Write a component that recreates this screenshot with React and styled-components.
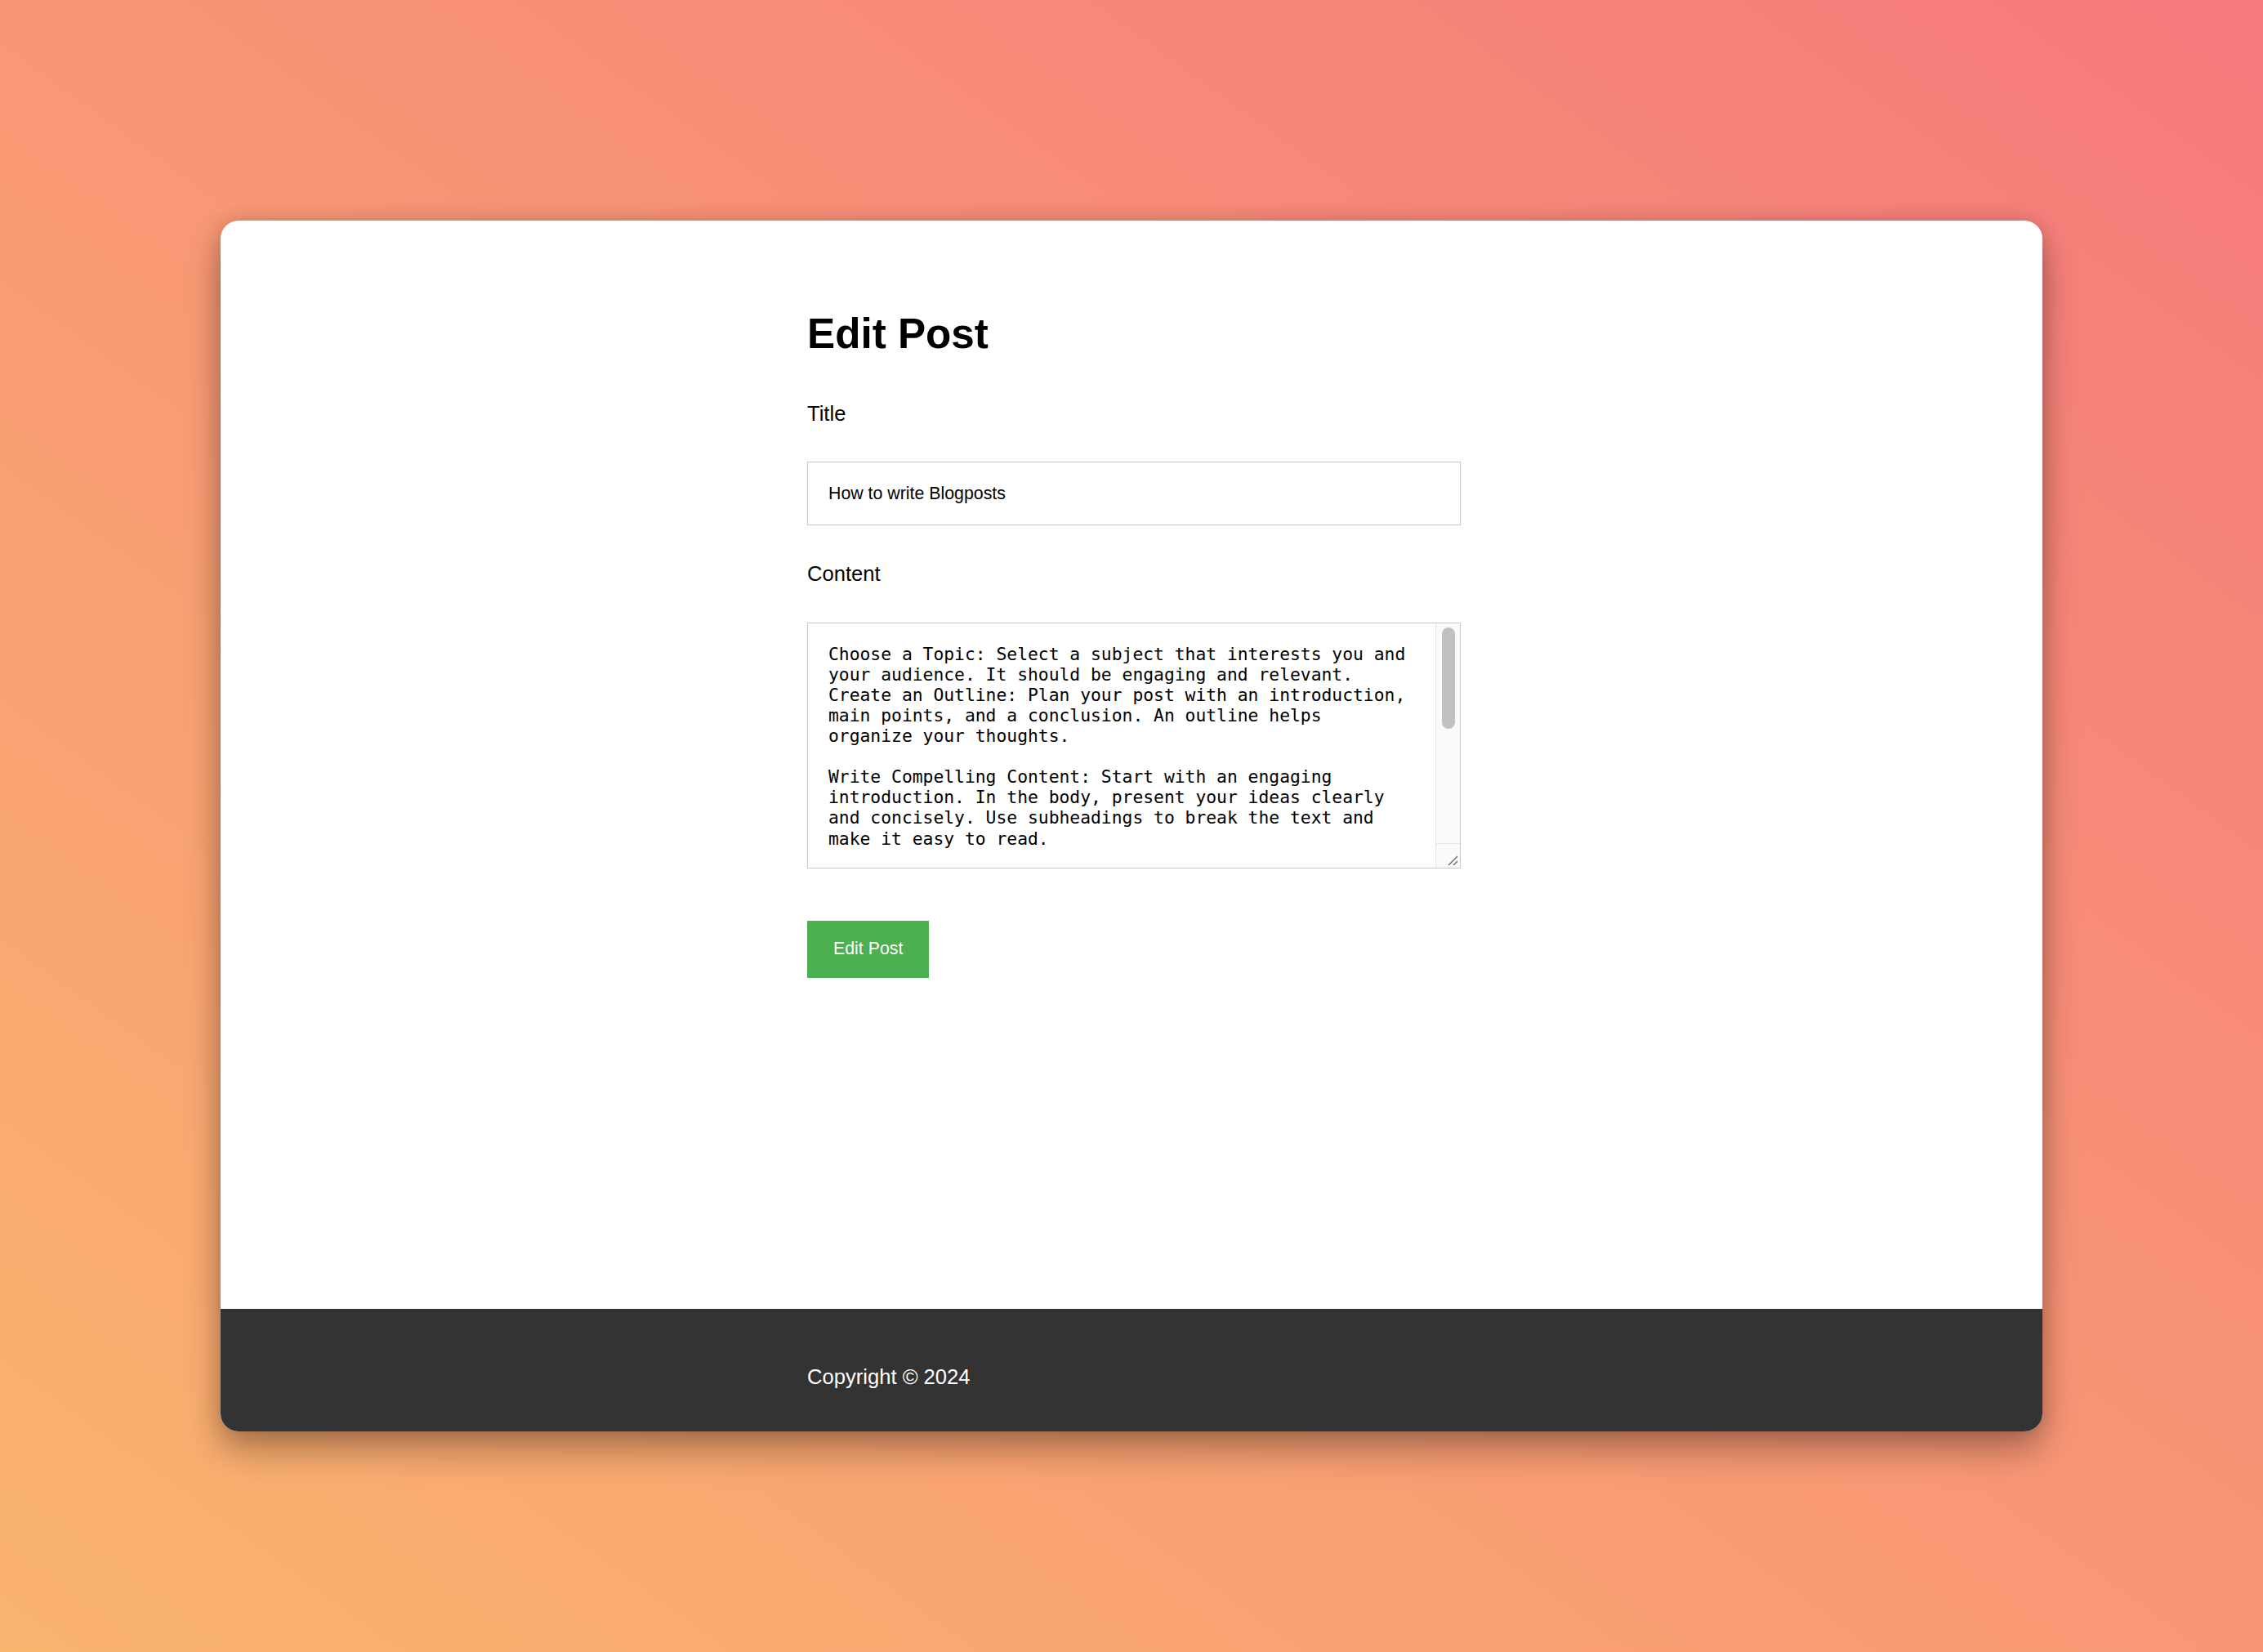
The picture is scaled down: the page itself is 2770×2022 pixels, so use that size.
import React from 'react';
import styled, { createGlobalStyle } from 'styled-components';

const GlobalStyle = createGlobalStyle`
  * {
    box-sizing: border-box;
  }

  html, body {
    margin: 0;
    padding: 0;
  }

  body {
    font-family: 'Liberation Sans', Arial, sans-serif;
    background: linear-gradient(to top right, #fab46e 0%, #f6797c 100%);
    min-height: 100vh;
  }
`;

const Page = styled.div`
  min-height: 100vh;
  display: flex;
  align-items: center;
  justify-content: center;
`;

const Card = styled.div`
  width: 2230px;
  height: 1482px;
  background: #fff;
  border-radius: 22px;
  overflow: hidden;
  display: flex;
  flex-direction: column;
  box-shadow: 0 22px 44px rgba(0, 0, 0, 0.32), 0 0 24px rgba(0, 0, 0, 0.12);
`;

const Main = styled.main`
  flex: 1;
  padding-top: 110px;
`;

const Container = styled.div`
  width: 800px;
  margin: 0 auto;
  position: relative;
  left: 3px;
`;

const Heading = styled.h1`
  margin: 0 0 53px;
  font-size: 51.2px;
  line-height: 1.15;
  font-weight: 700;
  color: #000;
`;

const Form = styled.form`
  display: flex;
  flex-direction: column;
  align-items: flex-start;
`;

const Group = styled.div`
  width: 100%;
  margin-bottom: 45px;
`;

const Label = styled.label`
  display: block;
  margin-bottom: 44px;
  font-size: 25.6px;
  line-height: 1.15;
  color: #000;
`;

const TextInput = styled.input`
  display: block;
  width: 100%;
  height: 78px;
  padding: 0 25px;
  border: 1px solid #c8c8c8;
  border-radius: 0;
  font-family: 'Liberation Sans', Arial, sans-serif;
  font-size: 21.33px;
  line-height: 1.15;
  color: #000;
  background: #fff;
  outline: none;
`;

const AreaWrap = styled.div`
  position: relative;
  width: 100%;
`;

const TextArea = styled.textarea`
  display: block;
  width: 100%;
  height: 301px;
  padding: 25px 58px 25px 25px;
  border: 1px solid #c8c8c8;
  border-radius: 0;
  font-family: 'DejaVu Sans Mono', 'Liberation Mono', monospace;
  font-size: 21.33px;
  line-height: 25.1px;
  color: #000;
  background: #fff;
  outline: none;
  resize: none;
`;

const ScrollTrack = styled.div`
  position: absolute;
  top: 1px;
  right: 1px;
  bottom: 1px;
  width: 30px;
  display: flex;
  flex-direction: column;
  background: #fafafa;
  border-left: 1px solid #e6e6e6;
  pointer-events: none;
`;

const ScrollRail = styled.div`
  flex: 1;
  padding: 5px 6px 0 7px;
`;

const ScrollThumb = styled.div`
  height: 124px;
  border-radius: 8px;
  background: #c1c1c1;
`;

const ScrollCorner = styled.div`
  height: 30px;
  border-top: 1px solid #e6e6e6;
  display: flex;
  align-items: flex-end;
  justify-content: flex-end;
  padding: 0 2px 2px 0;
`;

const SubmitButton = styled.button`
  margin-top: 19px;
  height: 70px;
  padding: 0 32px;
  border: none;
  border-radius: 0;
  background: #4caf50;
  color: #fff;
  font-family: 'Liberation Sans', Arial, sans-serif;
  font-size: 21.33px;
  line-height: 1.15;
  cursor: pointer;
`;

const Footer = styled.footer`
  height: 150px;
  padding-top: 69px;
  background: #333;
  color: #fff;
`;

const FooterText = styled.p`
  margin: 0;
  font-size: 25.6px;
  line-height: 1.15;
`;

const postContent = `Choose a Topic: Select a subject that interests you and your audience. It should be engaging and relevant.
Create an Outline: Plan your post with an introduction, main points, and a conclusion. An outline helps organize your thoughts.

Write Compelling Content: Start with an engaging introduction. In the body, present your ideas clearly and concisely. Use subheadings to break the text and make it easy to read.

Edit and Proofread: Review your post for grammar, spelling, and clarity. Remove unnecessary words and make sure your ideas flow logically.

Add Visuals: Include images, charts, or videos to support your content and keep readers engaged.

Publish and Promote: Share your post on social media and with your community to reach more readers.`;

function ResizeGrip() {
  return (
    <svg width="14" height="14" viewBox="0 0 14 14">
      <path d="M2 13 L13 2 M8 13 L13 8" stroke="#666" strokeWidth="1.4" fill="none" />
    </svg>
  );
}

export default function App() {
  return (
    <>
      <GlobalStyle />
      <Page>
        <Card>
          <Main>
            <Container>
              <Heading>Edit Post</Heading>
              <Form onSubmit={e => e.preventDefault()}>
                <Group>
                  <Label htmlFor="title">Title</Label>
                  <TextInput id="title" type="text" defaultValue="How to write Blogposts" />
                </Group>
                <Group>
                  <Label htmlFor="content">Content</Label>
                  <AreaWrap>
                    <TextArea id="content" defaultValue={postContent} />
                    <ScrollTrack>
                      <ScrollRail>
                        <ScrollThumb />
                      </ScrollRail>
                      <ScrollCorner>
                        <ResizeGrip />
                      </ScrollCorner>
                    </ScrollTrack>
                  </AreaWrap>
                </Group>
                <SubmitButton type="submit">Edit Post</SubmitButton>
              </Form>
            </Container>
          </Main>
          <Footer>
            <Container>
              <FooterText>Copyright © 2024</FooterText>
            </Container>
          </Footer>
        </Card>
      </Page>
    </>
  );
}
